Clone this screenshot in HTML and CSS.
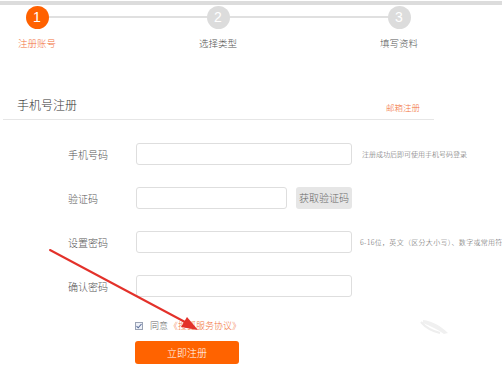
FILE: index.html
```html
<!DOCTYPE html>
<html lang="zh-CN">
<head>
<meta charset="utf-8">
<title>注册</title>
<link rel="stylesheet" href="styles.css">
</head>
<body>
<div class="page">
  <div class="topbar"></div>
  <div class="steps">
    <div class="step active"><span class="num">1</span><span class="label">注册账号</span></div>
    <div class="step"><span class="num">2</span><span class="label">选择类型</span></div>
    <div class="step"><span class="num">3</span><span class="label">填写资料</span></div>
  </div>
  <div class="head">
    <h2 class="title">手机号注册</h2>
    <a class="switch">邮箱注册</a>
  </div>
  <form class="form">
    <div class="row">
      <label class="lbl">手机号码</label>
      <input class="inp" type="text">
      <span class="hint">注册成功后即可使用手机号码登录</span>
    </div>
    <div class="row">
      <label class="lbl">验证码</label>
      <input class="inp short" type="text">
      <span class="getcode">获取验证码</span>
    </div>
    <div class="row">
      <label class="lbl">设置密码</label>
      <input class="inp" type="password">
      <span class="hint hint2">6-16位，英文（区分大小写）、数字或常用符号</span>
    </div>
    <div class="row">
      <label class="lbl">确认密码</label>
      <input class="inp" type="password">
    </div>
    <div class="agree">
      <span class="box"><svg viewBox="0 0 8 8" width="8" height="8"><path d="M1.5 4.2 L3.2 5.8 L6.5 2" fill="none" stroke="#5a6e9a" stroke-width="1.1"/></svg></span>
      <span class="agree-text">同意</span><a class="protocol">《搜狐服务协议》</a>
    </div>
    <button class="submit" type="button">立即注册</button>
  </form>
  <svg class="overlay" width="502" height="377" viewBox="0 0 502 377">
    <path d="M423 320 C432 321 441 326 448 333 L444 334 C437 329 430 326 423 323 Z" fill="#f0f0f0"/>
    <path d="M421 322 C426 328 432 331 440 333" fill="none" stroke="#eeeeee" stroke-width="2"/>
    <line x1="50" y1="250" x2="185" y2="322" stroke="#e3312a" stroke-width="2" stroke-linecap="round"/>
    <polygon points="198,330 181,327 187,317" fill="#e3312a"/>
  </svg>
</div>
</body>
</html>
```

FILE: styles.css
```css
* { box-sizing: border-box; }
html, body { margin: 0; padding: 0; background: #fff; }
body {
  font-family: "Noto Sans CJK SC", "Noto Sans", "Liberation Sans", sans-serif;
  font-weight: 300;
  color: #333;
}
.page {
  position: relative;
  width: 502px;
  height: 377px;
  overflow: hidden;
}
.topbar {
  height: 4px;
  margin-top: 1px;
  background: #dcdcdc;
}
.steps {
  display: grid;
  grid-template-columns: 60px 60px 60px;
  column-gap: 121px;
  padding-left: 7px;
  padding-top: 1px;
  background: linear-gradient(#e0e0e0, #e0e0e0) no-repeat 37px 11px / 362px 2px;
}
.step {
  display: flex;
  flex-direction: column;
  align-items: center;
}
.num {
  width: 23px;
  height: 23px;
  border-radius: 50%;
  background: #dcdcdc;
  color: #fff;
  font-family: "Liberation Sans", Arial, sans-serif;
  font-weight: normal;
  font-size: 14px;
  line-height: 23px;
  text-align: center;
}
.step.active .num { background: #ff6100; }
.label {
  margin-top: 8px;
  font-size: 9.5px;
  line-height: 12px;
  color: #555;
  white-space: nowrap;
}
.step.active .label { color: #f2703a; }
.head {
  display: flex;
  justify-content: space-between;
  align-items: flex-end;
  width: 431px;
  margin: 47px 0 0 3px;
  padding: 0 14px 6px 14px;
  border-bottom: 1px solid #e6e6e6;
}
.title {
  margin: 0;
  font-size: 12px;
  line-height: 17px;
  font-weight: 300;
  color: #333;
}
.switch {
  font-size: 8.5px;
  line-height: 12px;
  color: #f2703a;
  margin-bottom: 0;
}
.form {
  padding: 23px 0 0 68px;
  margin: 0;
}
.row {
  display: flex;
  align-items: center;
  height: 22px;
  margin-bottom: 22px;
}
.lbl {
  flex: none;
  width: 68px;
  font-size: 10px;
  color: #555;
}
.inp {
  flex: none;
  width: 216px;
  height: 22px;
  border: 1px solid #dedede;
  border-radius: 3px;
  padding: 0 6px;
  outline: none;
  background: #fff;
}
.inp.short { width: 151px; }
.hint {
  flex: none;
  margin-left: 10px;
  font-size: 7px;
  color: #666;
  white-space: nowrap;
}
.hint2 { margin-left: 8px; letter-spacing: 0.3px; }
.getcode {
  flex: none;
  margin-left: 9px;
  width: 56px;
  height: 22px;
  border-radius: 3px;
  background: #e6e6e6;
  color: #666;
  font-size: 10px;
  line-height: 22px;
  text-align: center;
}
.agree {
  display: flex;
  align-items: center;
  margin: 1px 0 0 67px;
  height: 14px;
  font-size: 9px;
  line-height: 14px;
}
.box {
  width: 8px;
  height: 8px;
  border: 1px solid #9aa3b5;
  background: #eef1f8;
  display: flex;
  margin-right: 7px;
}
.box svg { display: block; margin: -1px; }
.agree-text { color: #666; margin-right: 1px; }
.protocol { color: #f2703a; }
.submit {
  display: block;
  margin: 8px 0 0 67px;
  width: 104px;
  height: 23px;
  border: none;
  border-radius: 3px;
  background: #ff6300;
  color: #fff;
  font-family: "Noto Sans CJK SC", sans-serif;
  font-weight: 300;
  font-size: 10px;
  padding: 0;
}
.overlay {
  position: absolute;
  left: 0;
  top: 0;
  pointer-events: none;
}
```
